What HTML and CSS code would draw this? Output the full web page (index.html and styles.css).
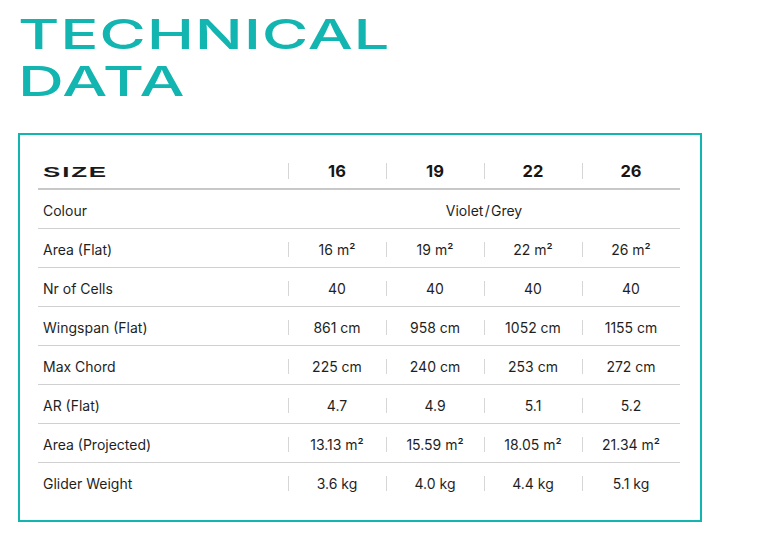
FILE: index.html
```html
<!DOCTYPE html>
<html lang="en">
<head>
<meta charset="utf-8">
<title>Technical Data</title>
<link rel="stylesheet" href="styles.css">
</head>
<body>
<main class="page">
  <h1 class="title"><span class="title-line">TECHNICAL</span><span class="title-line">DATA</span></h1>
  <section class="card">
    <div class="specs">
      <div class="row head">
        <div class="label"><span class="size-word">SIZE</span></div>
        <div class="val">16</div>
        <div class="val">19</div>
        <div class="val">22</div>
        <div class="val">26</div>
      </div>
      <div class="row">
        <div class="label">Colour</div>
        <div class="span-all">Violet&#8202;/&#8202;Grey</div>
      </div>
      <div class="row">
        <div class="label">Area (Flat)</div>
        <div class="val">16 m²</div>
        <div class="val">19 m²</div>
        <div class="val">22 m²</div>
        <div class="val">26 m²</div>
      </div>
      <div class="row">
        <div class="label">Nr of Cells</div>
        <div class="val">40</div>
        <div class="val">40</div>
        <div class="val">40</div>
        <div class="val">40</div>
      </div>
      <div class="row">
        <div class="label">Wingspan (Flat)</div>
        <div class="val">861 cm</div>
        <div class="val">958 cm</div>
        <div class="val">1052 cm</div>
        <div class="val">1155 cm</div>
      </div>
      <div class="row">
        <div class="label">Max Chord</div>
        <div class="val">225 cm</div>
        <div class="val">240 cm</div>
        <div class="val">253 cm</div>
        <div class="val">272 cm</div>
      </div>
      <div class="row">
        <div class="label">AR (Flat)</div>
        <div class="val">4.7</div>
        <div class="val">4.9</div>
        <div class="val">5.1</div>
        <div class="val">5.2</div>
      </div>
      <div class="row">
        <div class="label">Area (Projected)</div>
        <div class="val">13.13 m²</div>
        <div class="val">15.59 m²</div>
        <div class="val">18.05 m²</div>
        <div class="val">21.34 m²</div>
      </div>
      <div class="row last">
        <div class="label">Glider Weight</div>
        <div class="val">3.6 kg</div>
        <div class="val">4.0 kg</div>
        <div class="val">4.4 kg</div>
        <div class="val">5.1 kg</div>
      </div>
    </div>
  </section>
</main>
</body>
</html>
```

FILE: styles.css
```css
html, body {
  margin: 0;
  padding: 0;
  background: #ffffff;
}

.page {
  padding: 11px 18px 0 18px;
  font-family: Inter, "Liberation Sans", sans-serif;
  color: #1f1f1f;
}

.title {
  margin: 0 0 28px 0;
  font-family: Inter, "Liberation Sans", sans-serif;
  font-weight: 500;
  font-size: 41px;
  line-height: 47px;
  color: #12b5b0;
}

.title-line {
  display: block;
  width: max-content;
  transform: scaleX(1.55);
  transform-origin: left top;
  letter-spacing: 0.5px;
}

.card {
  width: 684px;
  box-sizing: border-box;
  border: 2px solid #12b5b0;
  padding: 18px 20px 18px 18px;
}

.specs {
  display: flex;
  flex-direction: column;
}

.row {
  display: grid;
  grid-template-columns: 250px repeat(4, 1fr);
  box-sizing: border-box;
  height: 39px;
  padding-top: 2px;
  align-items: center;
  border-bottom: 1px solid #d0d0d0;
  font-size: 14px;
}

.row.head {
  height: 37px;
  padding-top: 0;
  border-bottom: 2px solid #c8c8c8;
  font-size: 16.5px;
  font-weight: 700;
  color: #161616;
}

.row.last {
  border-bottom: none;
}

.label {
  padding-left: 5px;
}

.size-word {
  display: inline-block;
  font-family: "Liberation Sans", sans-serif;
  font-weight: 700;
  font-size: 14px;
  letter-spacing: 1px;
  transform: scaleX(1.85);
  transform-origin: left center;
  color: #1a1a1a;
}

.val {
  height: 100%;
  display: flex;
  align-items: center;
  justify-content: center;
  background: linear-gradient(#d6d6d6, #d6d6d6) left center / 1px 15px no-repeat;
}

.head .val {
  background-size: 1px 16px;
}

.span-all {
  grid-column: 2 / 6;
  text-align: center;
}
```
